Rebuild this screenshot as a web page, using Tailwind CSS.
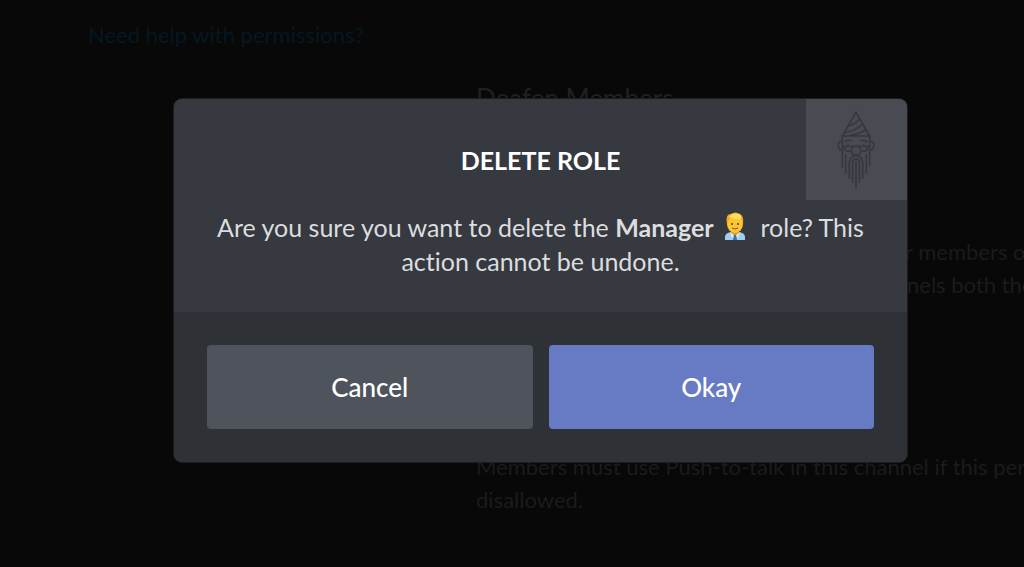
<!DOCTYPE html>
<html lang="en">
<head>
  <meta charset="UTF-8" />
  <title>Delete Role</title>
  <script src="https://cdn.jsdelivr.net/npm/@tailwindcss/browser@4"></script>
</head>
<body class="bg-[#080808] font-[Lato,'Noto_Sans',sans-serif] [font-variant-ligatures:none] h-screen overflow-hidden relative">
  <!-- settings page behind the backdrop -->
  <div class="flex h-full pl-[88px] text-[#1b1b1c] overflow-hidden">
    <aside class="w-[388px] shrink-0 pt-[19px]">
      <a href="#" class="text-[22px] leading-8 text-[#041822]">Need help with permissions?</a>
    </aside>
    <main class="grow min-w-0 whitespace-nowrap text-[22px] leading-[33px]">
      <hr class="mt-[45px] border-[#0a0a0a]" />
      <h2 class="mt-9 text-[26px] text-[#202021]">Deafen Members</h2>
      <p class="mt-[120px] pl-[385px]">other members or<br />channels both the</p>
      <p class="mt-[149px]">Members must use Push-to-talk in this channel if this permission is<br />disallowed.</p>
      <hr class="mt-8 border-[#0a0a0a]" />
    </main>
  </div>

  <div class="absolute inset-0 flex justify-center items-start pt-[99px] pl-[57px]">
    <div role="dialog" aria-labelledby="title" class="relative w-[733px] rounded-lg overflow-hidden bg-[#363940] ring-1 ring-[#1c1e21] text-center">
      <svg class="absolute top-0 right-0 size-[101px] bg-[#484b52]" viewBox="18 22 303 303" fill="none" stroke="#35383e" stroke-width="5">
        <path d="M168 62 127 133H209Z M147 102Q166 97 179 81 M135 123Q168 117 188 97 M150 131Q180 127 198 114" />
        <path d="M127 133V228 M209 133V224 M127 148C112 148 110 172 127 176 M209 148C226 148 226 172 209 176" />
        <path d="M134 151Q143 143 155 147 M181 147Q192 143 202 151 M127 164H209 M133 164C134 184 157 184 158 164 M178 164C179 184 202 184 203 164" />
        <path d="M144 156V160 M191 156V160" />
        <path d="M158 179C151 190 160 192 168 188C176 192 185 190 178 179" />
        <path d="M137 187V246 M148 262V212C148 186 188 186 188 212V262 M158 273V212C158 198 178 198 178 212V273 M168 209V288 M199 187V246" />
      </svg>
      <div class="px-8 pt-11 pb-[34px]">
        <h1 id="title" class="text-[25px] leading-[34px] font-bold text-white">DELETE ROLE</h1>
        <p class="mt-[33px] text-[25px] leading-[34px] text-[#dcddde]">Are you sure you want to delete the <b>Manager</b>
          <svg class="inline-block align-[-3px] w-[22px] h-[28px] ml-1 mr-2" viewBox="0 0 22 28" aria-hidden="true">
            <path d="M1 28V25Q1 21 7 20H15Q21 21 21 25V28Z" fill="#a3cdf0" />
            <path d="M7 18H15V21L11 24 7 21Z" fill="#e09a12" />
            <path d="M6 20 11 24 8 26ZM16 20 11 24 14 26Z" fill="#d5eafa" />
            <path d="M10 23H12L13 28H9Z" fill="#3f719e" />
            <ellipse cx="11" cy="12" rx="8" ry="9" fill="#fdc52e" />
            <path d="M3 12Q1 2 7 2Q11-1 16 2Q20 4 19 12L17 7Q11 7 6 6Z" fill="#f4a91f" />
            <path d="M5 5Q8 0 15 2Q18 4 17 7Q11 8 5 5Z" fill="#ffdc62" />
            <circle cx="8" cy="12" r="1" fill="#5b3a16" />
            <circle cx="14" cy="12" r="1" fill="#5b3a16" />
            <path d="M8 16Q11 18 14 16" fill="none" stroke="#9a4c12" />
          </svg>
          role? This action cannot be undone.</p>
      </div>
      <div class="flex gap-4 bg-[#2e3136] p-[33px] text-[26px] font-medium text-white">
        <button class="flex-1 h-[84px] rounded bg-[#4f545c]">Cancel</button>
        <button class="flex-1 h-[84px] rounded bg-[#677bc4]">Okay</button>
      </div>
    </div>
  </div>
</body>
</html>
